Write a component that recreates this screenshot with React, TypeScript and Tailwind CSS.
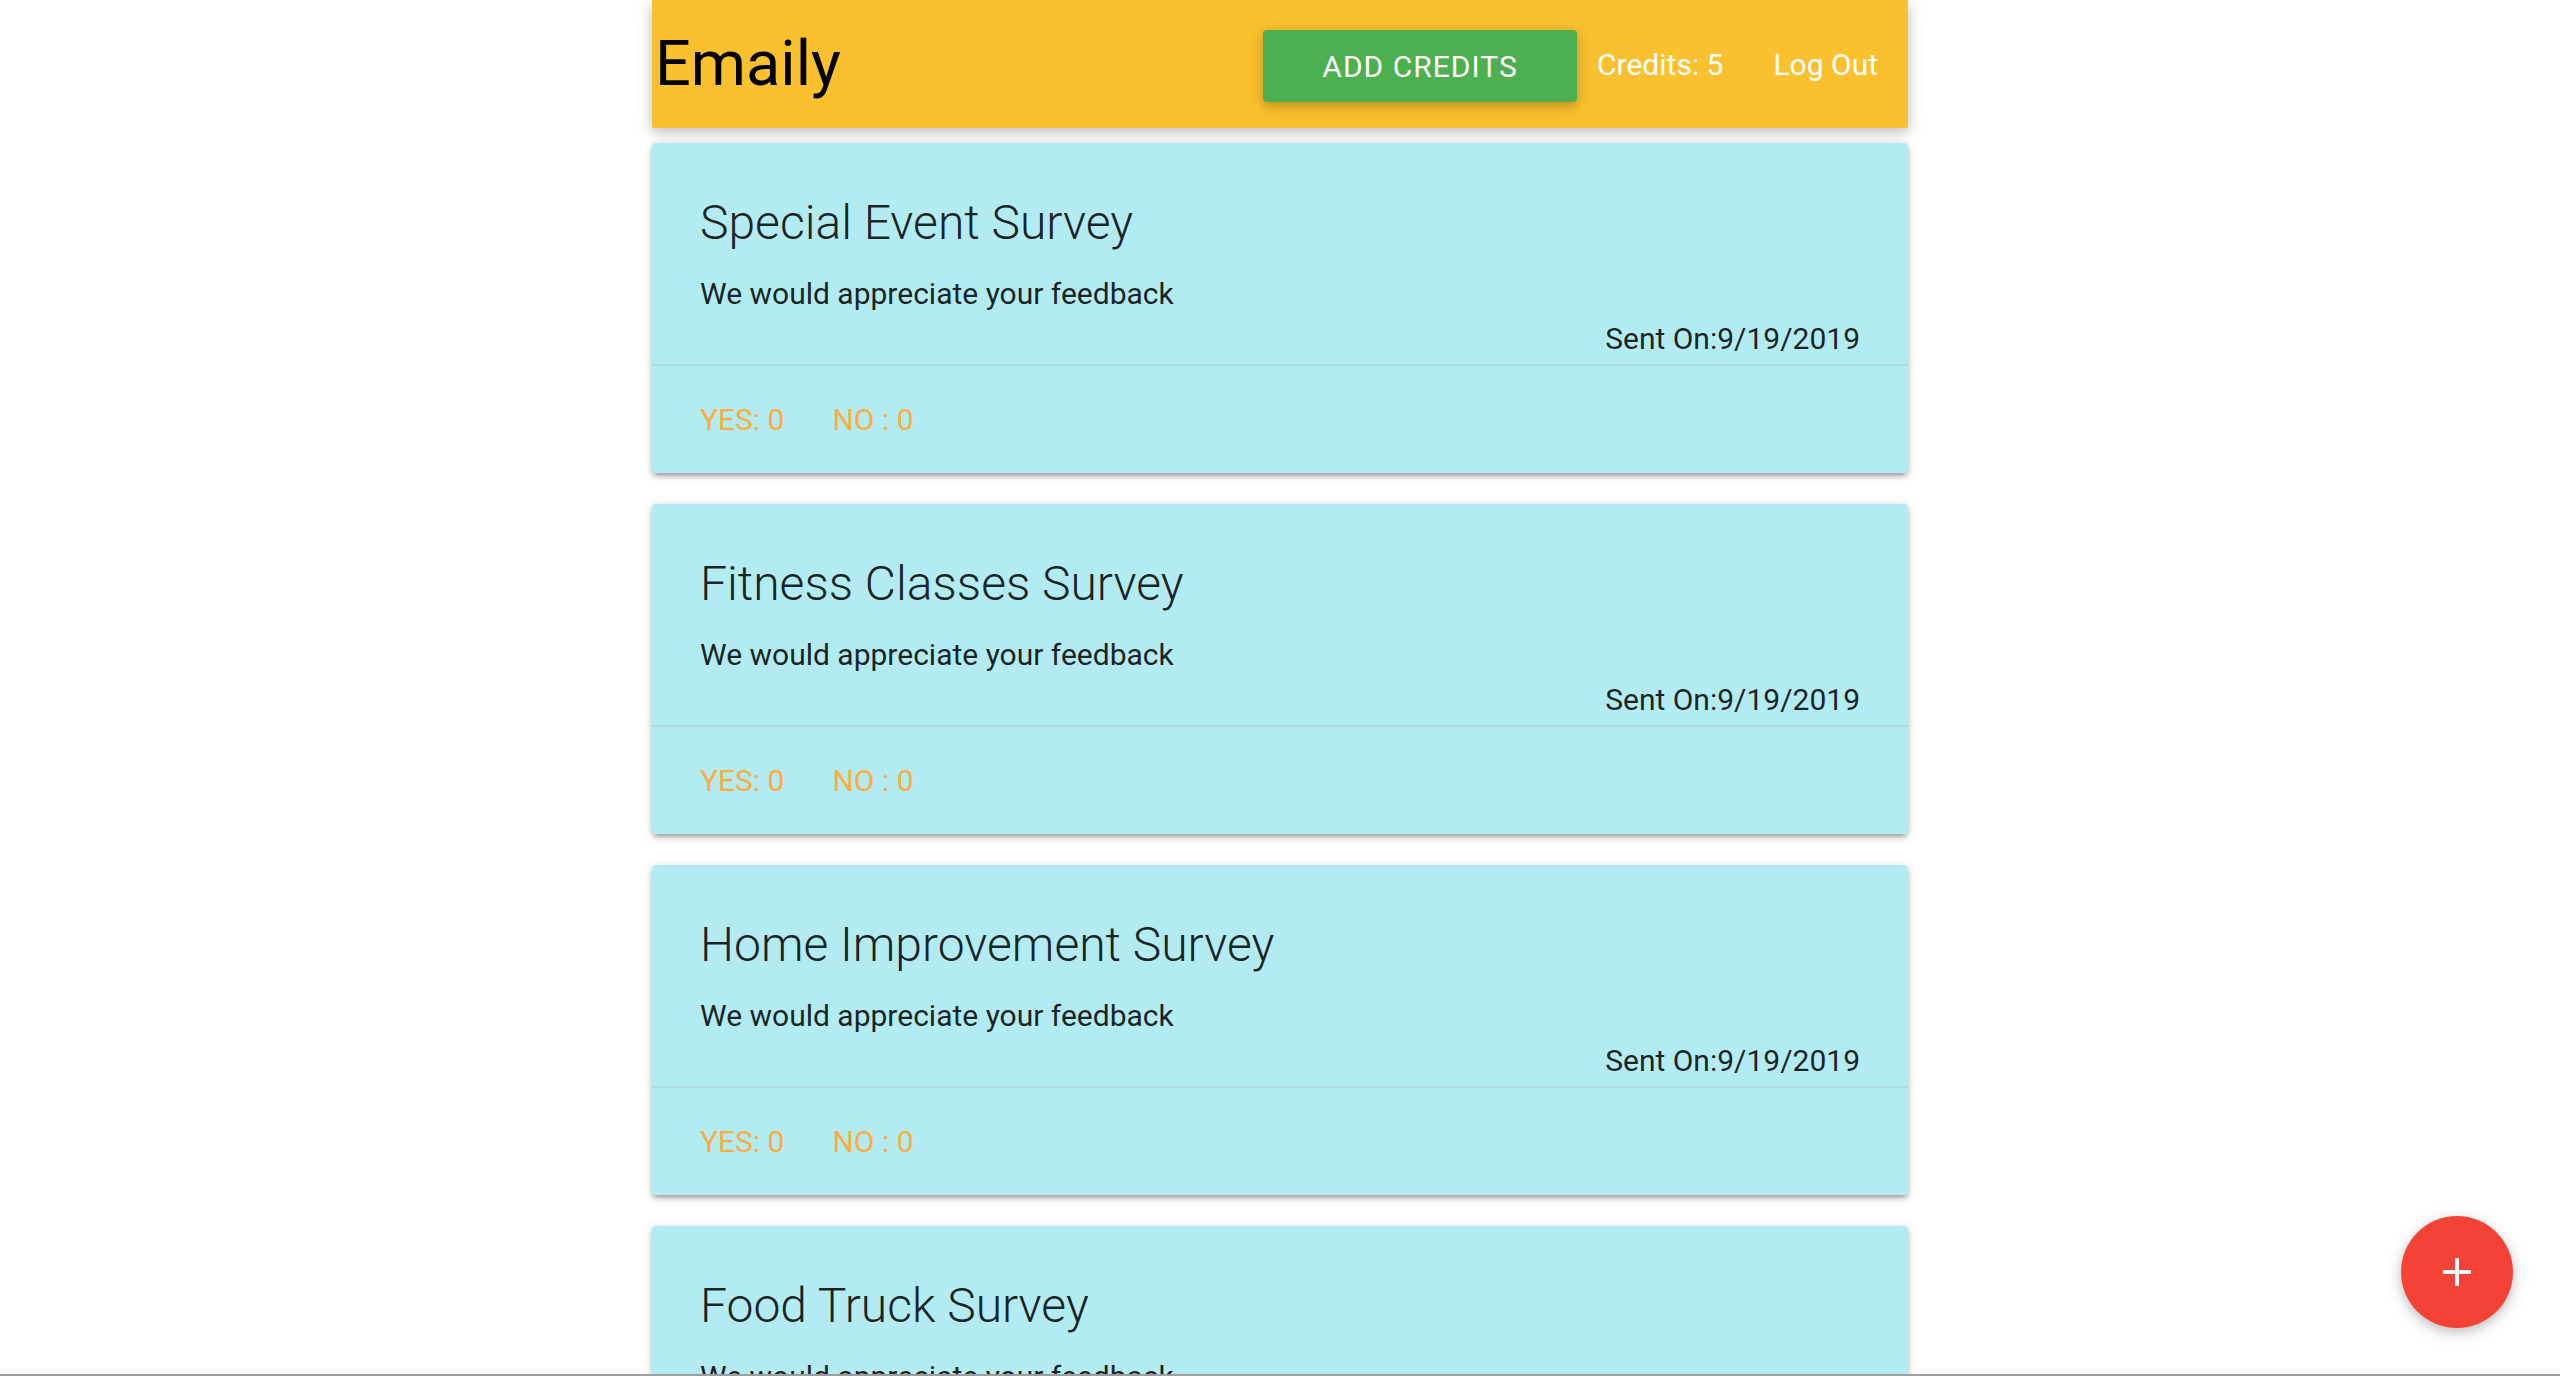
import React from 'react';

interface Survey {
  title: string;
  body: string;
  sent: string;
  yes: number;
  no: number;
}

const SURVEYS: Survey[] = [
  { title: 'Special Event Survey', body: 'We would appreciate your feedback', sent: '9/19/2019', yes: 0, no: 0 },
  { title: 'Fitness Classes Survey', body: 'We would appreciate your feedback', sent: '9/19/2019', yes: 0, no: 0 },
  { title: 'Home Improvement Survey', body: 'We would appreciate your feedback', sent: '9/19/2019', yes: 0, no: 0 },
  { title: 'Food Truck Survey', body: 'We would appreciate your feedback', sent: '9/19/2019', yes: 0, no: 0 },
];

const Header = () => (
  <nav className="h-[128px] bg-[#fbc02d] shadow-[0_4px_10px_0_rgba(0,0,0,0.16),0_4px_20px_0_rgba(0,0,0,0.12)] flex items-center justify-between">
    <a className="text-[63px] leading-[128px] text-black pl-[3px]">Emaily</a>
    <ul className="flex items-center h-full text-[30px] text-white">
      <li>
        <button className="mt-[4px] h-[72px] w-[314px] rounded-[4px] bg-[#4caf50] text-white text-[30px] tracking-[1px] uppercase shadow-[0_4px_10px_0_rgba(0,0,0,0.16),0_4px_20px_0_rgba(0,0,0,0.12)]">
          Add Credits
        </button>
      </li>
      <li className="mx-[20px]">Credits: 5</li>
      <li>
        <a className="px-[30px]">Log Out</a>
      </li>
    </ul>
  </nav>
);

const SurveyCard = ({ survey }: { survey: Survey }) => (
  <div className="mt-[15px] mb-[31px] bg-[#b2ebf2] rounded-[4px] shadow-[0_4px_4px_0_rgba(0,0,0,0.14),0_6px_2px_-4px_rgba(0,0,0,0.12),0_2px_10px_0_rgba(0,0,0,0.2)] text-[rgba(0,0,0,0.87)]">
    <div className="p-[48px]">
      <span className="block text-[48px] leading-[64px] font-light mb-[16px]">{survey.title}</span>
      <p className="text-[30px] leading-[45px]">{survey.body}</p>
      <p className="float-right text-[30px] leading-[45px]">Sent On:{survey.sent}</p>
    </div>
    <div className="border-t-[2px] border-[rgba(160,160,160,0.2)] px-[48px] py-[32px] text-[30px] leading-[43px] text-[#ffab40] uppercase">
      <a className="mr-[48px]">Yes: {survey.yes}</a>
      <a>No : {survey.no}</a>
    </div>
  </div>
);

export default function App() {
  return (
    <div className="h-screen flex flex-col bg-white" style={{ fontFamily: 'Roboto, "Liberation Sans", sans-serif' }}>
      <div className="flex-1 overflow-hidden relative">
        <div className="w-[1256px] mx-auto">
          <Header />
          {SURVEYS.map((s) => (
            <SurveyCard key={s.title} survey={s} />
          ))}
        </div>
        <button className="absolute right-[47px] bottom-[46px] w-[112px] h-[112px] rounded-full bg-[#f44336] flex items-center justify-center shadow-[0_4px_10px_0_rgba(0,0,0,0.16),0_4px_20px_0_rgba(0,0,0,0.12)]">
          <svg width="28" height="28" viewBox="0 0 28 28">
            <path d="M14 0v28M0 14h28" stroke="white" strokeWidth="4" />
          </svg>
        </button>
      </div>
      <div className="h-[2px] bg-[#9e9e9e]" />
    </div>
  );
}
